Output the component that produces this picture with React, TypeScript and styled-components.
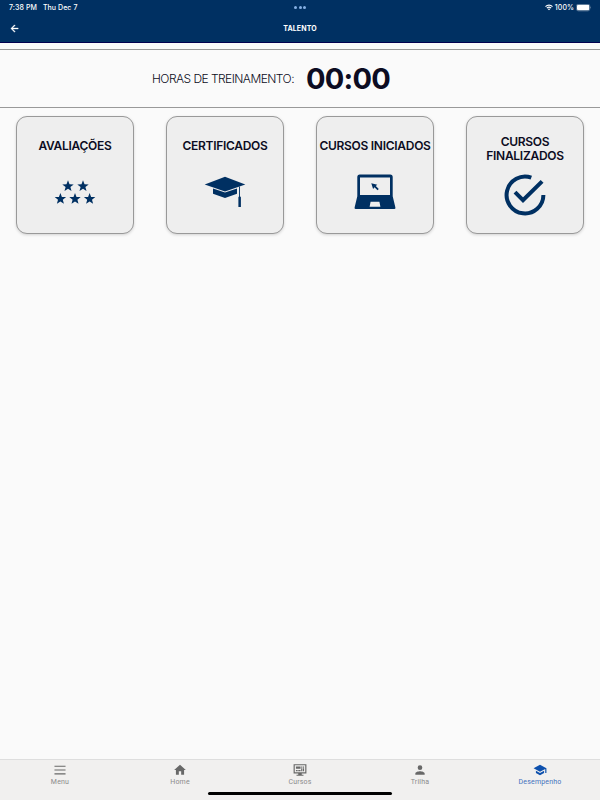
import React from "react";
import styled, { createGlobalStyle } from "styled-components";

const NAVY = "#003062";

const GlobalStyle = createGlobalStyle`
  *, *::before, *::after { box-sizing: border-box; }
  body { margin: 0; background: #fafafa; }
`;

const Screen = styled.div`
  display: flex;
  flex-direction: column;
  width: 600px;
  height: 800px;
  overflow: hidden;
  background: #fafafa;
  color: #0c0c22;
  font-family: Inter, "Liberation Sans", sans-serif;
`;

const Header = styled.header`
  flex: none;
  height: 43px;
  background: ${NAVY};
  border-bottom: 1px solid #00004f;
  color: #fff;
`;

const HeaderRow = styled.div<{ $height: number }>`
  display: grid;
  grid-template-columns: 1fr auto 1fr;
  align-items: center;
  height: ${(p) => p.$height}px;
  padding: 0 9px;
`;

const StatusText = styled.div`
  display: flex;
  gap: 6px;
  padding-top: 1px;
  font-size: 7px;
  font-weight: 500;
  line-height: 13px;
  letter-spacing: 0.07px;
  white-space: nowrap;
`;

const StatusIcons = styled(StatusText)`
  justify-content: flex-end;
  align-items: center;
  gap: 2px;
`;

const Dots = styled.div`
  display: flex;
  gap: 1.6px;
  i {
    width: 3px;
    height: 3px;
    border-radius: 50%;
    background: #85b0e4;
  }
`;

const Title = styled.h1`
  margin: 0;
  padding-top: 2px;
  font-size: 7px;
  font-weight: 700;
  line-height: 10px;
  letter-spacing: 0.1px;
`;

const Hours = styled.section`
  display: flex;
  flex: none;
  align-items: center;
  height: 59px;
  margin-top: 6px;
  padding-left: 152px;
  border-top: 1px solid #999;
  border-bottom: 1px solid #999;
  white-space: nowrap;
`;

const HoursLabel = styled.span`
  width: 154px;
  font-size: 12px;
  font-weight: 300;
  letter-spacing: -0.54px;
`;

const HoursValue = styled.strong`
  font-size: 29px;
  font-weight: 700;
  line-height: 36px;
  letter-spacing: -0.8px;
`;

const Cards = styled.main`
  display: grid;
  flex: 1;
  grid-template-columns: repeat(4, 118px);
  align-content: start;
  gap: 32px;
  padding: 8px 16px;
`;

const Card = styled.article`
  display: flex;
  flex-direction: column;
  align-items: center;
  height: 118px;
  padding-top: 18px;
  background: #eee;
  border: 1px solid #999;
  border-radius: 11px;
  box-shadow: 0 1px 3px rgba(0, 0, 0, 0.16);
`;

const CardTitle = styled.h2<{ $twoLines: boolean }>`
  height: 28px;
  margin: 0;
  padding-top: ${(p) => (p.$twoLines ? 0 : 4)}px;
  font-size: 12px;
  font-weight: 600;
  line-height: 14px;
  letter-spacing: -0.28px;
  text-align: center;
  white-space: pre;
`;

const CardIcon = styled.svg`
  display: block;
  flex: none;
  width: 42px;
  height: 46px;
  margin-top: 8px;
  fill: ${NAVY};
`;

const TabBar = styled.nav`
  display: grid;
  flex: none;
  grid-template-columns: repeat(5, 1fr);
  height: 32px;
  padding-top: 3px;
  background: #f1f0ef;
  border-top: 1px solid #dedede;
`;

const Tab = styled.a<{ $active?: boolean }>`
  display: flex;
  flex-direction: column;
  align-items: center;
  color: ${(p) => (p.$active ? "#4472bd" : "#8b8b8b")};
  font-family: Roboto, sans-serif;
  font-size: 7px;
  line-height: 10px;
  letter-spacing: 0.18px;
  svg {
    display: block;
    width: 14px;
    height: 14px;
    fill: ${(p) => (p.$active ? "#0d50ad" : "#686868")};
  }
`;

const HomeArea = styled.footer`
  display: flex;
  flex: none;
  justify-content: center;
  height: 9px;
  padding-top: 1px;
  background: #f1f0ef;
`;

const HomeIndicator = styled.div`
  width: 184px;
  height: 3px;
  border-radius: 2px;
  background: #000;
`;

const Wifi = () => (
  <svg width="8" height="7" viewBox="0 0 16 12" fill="none" stroke="#fff" strokeWidth="2.2">
    <path d="M1 4.2a10 10 0 0 1 14 0M3.7 7.2a6.2 6.2 0 0 1 8.6 0" />
    <path d="M5.5 8.8a4 4 0 0 1 5 0L8 11.7z" fill="#fff" stroke="none" />
  </svg>
);

const Battery = () => (
  <svg width="15" height="8" viewBox="0 0 15 8">
    <rect x=".4" y=".1" width="13.4" height="6.8" rx="2" fill="none" stroke="#8097b0" strokeWidth=".6" />
    <rect x="1" y=".7" width="12.2" height="5.6" rx="1.4" fill="#fff" />
    <path d="M14.2 2.5v2c.8-.3.8-1.7 0-2z" fill="#8097b0" />
  </svg>
);

const BackArrow = () => (
  <svg width="11" height="11" viewBox="0 0 24 24" fill="#fff">
    <path d="M20 11H7.83l5.59-5.59L12 4l-8 8 8 8 1.41-1.41L7.83 13H20z" stroke="#fff" strokeWidth=".8" />
  </svg>
);

const starCenters = [[14, 15], [29, 15], [6.4, 27.7], [21, 27.7], [35.6, 27.7]];

const Stars = () => (
  <CardIcon viewBox="0 0 42 46">
    {starCenters.map(([x, y]) => (
      <path key={`${x}-${y}`} transform={`translate(${x} ${y})`} d="M0-5.7 1.5-1.8 5.7-1.6 2.4 1 3.5 5 0 2.7-3.5 5-2.4 1-5.7-1.6-1.5-1.8z" />
    ))}
  </CardIcon>
);

const Cap = () => (
  <CardIcon viewBox="0 0 42 46">
    <path d="M21 5.8 41.3 13.5 21 20.4.7 13.5z" />
    <path d="M9 17.5 21 21.4l12-3.9v5.2l-12 4.3-12-4.3z" />
    <path d="M35.1 15.6h.9v9.6l.9 1v9.8h-2.5v-9.8l.7-1z" />
  </CardIcon>
);

const Laptop = () => (
  <CardIcon viewBox="0 0 42 46">
    <path fillRule="evenodd" d="M5.8 3.6h30.4q2.5 0 2.5 2.5v19.1L41.4 36.4q.3 1.6-1.2 1.6H1.8q-1.5 0-1.2-1.6L3.3 25.2V6.1q0-2.5 2.5-2.5zm.2 2.9v17.5h30V6.5zm10.6 24.3-1 4.9h10.8l-1-4.9z" />
    <path d="m17.3 12.2 6 1.5-1.5 1.4 3 3-1.3 1.2-3-3-1.4 1.7z" />
  </CardIcon>
);

const Check = () => (
  <CardIcon viewBox="0 0 42 46">
    <path d="M39.4 24A18.4 18.4 0 1 1 27.3 6.7" fill="none" stroke={NAVY} strokeWidth="4" />
    <path d="m11 21.2 8 8L38.1 10.3" fill="none" stroke={NAVY} strokeWidth="4" />
  </CardIcon>
);

const cards = [
  { lines: ["AVALIAÇÕES"], icon: <Stars /> },
  { lines: ["CERTIFICADOS"], icon: <Cap /> },
  { lines: ["CURSOS INICIADOS"], icon: <Laptop /> },
  { lines: ["CURSOS", "FINALIZADOS"], icon: <Check /> },
];

const tabs = [
  { label: "Menu", icon: <path d="M2.5 4.5h19v2h-19zm0 6.5h19v2h-19zm0 6.5h19v2h-19z" /> },
  { label: "Home", icon: <path d="M10 20v-6h4v6h5v-8h3L12 3 2 12h3v8z" /> },
  { label: "Cursos", icon: <path fillRule="evenodd" d="M1 2h22v16h-8v2h3v2H6v-2h3v-2H1zm2 2v12h18V4zm2 2h8v4H5zm9 0h2v2h-2zm3 0h2v2h-2zM5 12h3v2H5zm4 0h4v2H9zm5-3h2v5h-2zm3 0h2v5h-2z" /> },
  { label: "Trilha", icon: <path d="M12 12a4 4 0 1 0 0-8 4 4 0 0 0 0 8m0 2c-2.7 0-8 1.3-8 4v2h16v-2c0-2.7-5.3-4-8-4" /> },
  { label: "Desempenho", active: true, icon: <path d="M5 13.2v4L12 21l7-3.8v-4L12 17zM12 3 1 9l11 6 9-4.9V17h2V9z" /> },
];

export default function App() {
  return (
    <>
      <GlobalStyle />
      <Screen>
        <Header>
          <HeaderRow $height={14}>
            <StatusText><span>7:38 PM</span><span>Thu Dec 7</span></StatusText>
            <Dots><i /><i /><i /></Dots>
            <StatusIcons><Wifi /><span>100%</span><Battery /></StatusIcons>
          </HeaderRow>
          <HeaderRow $height={28}>
            <BackArrow />
            <Title>TALENTO</Title>
          </HeaderRow>
        </Header>
        <Hours>
          <HoursLabel>HORAS DE TREINAMENTO:</HoursLabel>
          <HoursValue>00:00</HoursValue>
        </Hours>
        <Cards>
          {cards.map(({ lines, icon }) => (
            <Card key={lines.join(" ")}>
              <CardTitle $twoLines={lines.length > 1}>{lines.join("\n")}</CardTitle>
              {icon}
            </Card>
          ))}
        </Cards>
        <TabBar>
          {tabs.map(({ label, icon, active }) => (
            <Tab key={label} $active={active}>
              <svg viewBox="0 0 24 24">{icon}</svg>
              {label}
            </Tab>
          ))}
        </TabBar>
        <HomeArea><HomeIndicator /></HomeArea>
      </Screen>
    </>
  );
}
